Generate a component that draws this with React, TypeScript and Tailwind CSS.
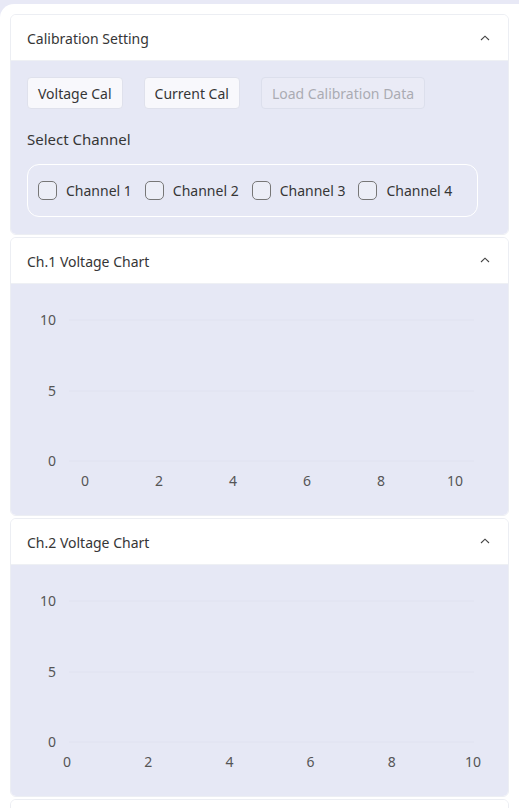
import React from "react";

const font = { fontFamily: '"Noto Sans", "Open Sans", sans-serif' };

function Chevron() {
  return (
    <svg width="10" height="6" viewBox="0 0 10 6" className="mb-[2px]">
      <polyline points="1,5 5,1.2 9,5" fill="none" stroke="#444" strokeWidth="1.1" />
    </svg>
  );
}

function Header({ title }: { title: string }) {
  return (
    <div className="h-[46px] bg-white flex items-center justify-between pl-4 pr-[18px] pt-[2px] border-b border-[#eef0f4]">
      <span className="text-[14px] text-[#363636]">{title}</span>
      <Chevron />
    </div>
  );
}

function Chart({ x0, x1 }: { x0: number; x1: number }) {
  const ys = [
    { v: "10", y: 36 },
    { v: "5", y: 107 },
    { v: "0", y: 177 },
  ];
  const xs = [0, 2, 4, 6, 8, 10];
  return (
    <svg width="497" height="231" className="block">
      {ys.map((t) => (
        <g key={t.v}>
          <line x1={58} x2={463} y1={t.y} y2={t.y} stroke="#e0e2f0" strokeWidth="1" />
          <text x={45} y={t.y + 5} textAnchor="end" fontSize="14" fill="#555" style={font}>
            {t.v}
          </text>
        </g>
      ))}
      {xs.map((v, i) => (
        <text
          key={v}
          x={x0 + ((x1 - x0) * i) / 5}
          y={202}
          textAnchor="middle"
          fontSize="14"
          fill="#555"
          style={font}
        >
          {v}
        </text>
      ))}
    </svg>
  );
}

function Checkbox({ label }: { label: string }) {
  return (
    <label className="flex items-center gap-[9px]">
      <span className="w-[19px] h-[19px] rounded-[5px] border border-[#777] bg-[#eceef7]" />
      <span className="text-[14px] text-[#363636]">{label}</span>
    </label>
  );
}

export default function App() {
  return (
    <div className="min-h-screen bg-[#e8e9f6] pt-[4px]" style={font}>
      <div className="bg-white rounded-tl-[14px] px-[10px] pt-[10px] flex flex-col gap-[2px]">
        <div className="border border-[#eceef3] rounded-[6px] overflow-hidden">
          <Header title="Calibration Setting" />
          <div className="bg-[#e6e8f5] px-4 pt-[16px] pb-[17px]">
            <div className="flex gap-[21px]">
              <button className="h-[32px] px-[10px] rounded-[4px] bg-[#f8f8fc] border border-[#dfe1ec] text-[14px] text-[#363636]">
                Voltage Cal
              </button>
              <button className="h-[32px] px-[10px] rounded-[4px] bg-[#f8f8fc] border border-[#dfe1ec] text-[14px] text-[#363636]">
                Current Cal
              </button>
              <button className="h-[32px] px-[10px] rounded-[4px] bg-[#eaebf6] border border-[#dcdfec] text-[14px] text-[#aaabb3]">
                Load Calibration Data
              </button>
            </div>
            <div className="mt-[19px] text-[15px] text-[#363636]">Select Channel</div>
            <div className="mt-[13px] w-[451px] h-[53px] border border-white rounded-[12px] flex items-center gap-[13px] pl-[10px]">
              <Checkbox label="Channel 1" />
              <Checkbox label="Channel 2" />
              <Checkbox label="Channel 3" />
              <Checkbox label="Channel 4" />
            </div>
          </div>
        </div>
        <div className="border border-[#eceef3] rounded-[6px] overflow-hidden">
          <Header title="Ch.1 Voltage Chart" />
          <div className="bg-[#e6e8f5]">
            <Chart x0={74} x1={444} />
          </div>
        </div>
        <div className="border border-[#eceef3] rounded-[6px] overflow-hidden">
          <Header title="Ch.2 Voltage Chart" />
          <div className="bg-[#e6e8f5]">
            <Chart x0={56} x1={462} />
          </div>
        </div>
        <div className="border border-[#eceef3] rounded-[6px] overflow-hidden">
          <div className="h-[46px] bg-white" />
        </div>
      </div>
    </div>
  );
}
